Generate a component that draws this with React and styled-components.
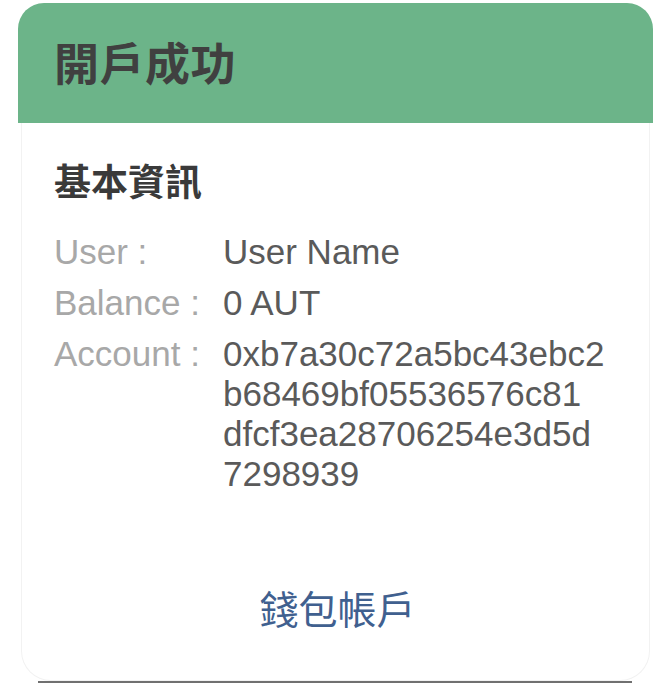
import React from "react";
import styled, { createGlobalStyle } from "styled-components";

const GlobalStyle = createGlobalStyle`
  body {
    margin: 0;
    background: #ffffff;
    font-family: "Liberation Sans", "Noto Sans CJK TC", sans-serif;
  }
`;

const Page = styled.div`
  padding: 3px 7px 0 18px;
  width: 635px;
`;

const Header = styled.div`
  height: 120px;
  display: flex;
  align-items: center;
  padding-left: 36px;
  background: #6cb489;
  border-radius: 26px 26px 0 0;
`;

const Title = styled.h1`
  margin: 0 0 4px;
  font-family: "Noto Sans CJK TC", sans-serif;
  font-size: 45px;
  font-weight: 700;
  color: #404040;
  letter-spacing: 0.5px;
`;

const Body = styled.div`
  margin: 0 3px;
  padding: 35px 20px 51px 32px;
  background: #ffffff;
  border: 1px solid #f2f2f2;
  border-top: none;
  border-radius: 0 0 30px 30px;
`;

const SectionTitle = styled.h2`
  margin: 0 0 30px;
  height: 44px;
  line-height: 44px;
  font-family: "Noto Sans CJK TC", sans-serif;
  font-size: 37px;
  font-weight: 700;
  color: #3a3a3a;
`;

const InfoList = styled.div`
  display: flex;
  flex-direction: column;
  gap: 11px;
`;

const Row = styled.div`
  display: flex;
  font-size: 35px;
  line-height: 40px;
`;

const Label = styled.span`
  flex: 0 0 169px;
  color: #a8a8a8;
`;

const Value = styled.span`
  display: flex;
  flex-direction: column;
  color: #5a5a5a;
`;

const WalletButton = styled.button`
  display: block;
  margin: 85px auto 0;
  padding: 0 8px 0 0;
  height: 50px;
  border: none;
  background: none;
  font-family: "Noto Sans CJK TC", sans-serif;
  font-size: 39px;
  font-weight: 400;
  color: #40608f;
  cursor: pointer;
`;

const BottomLine = styled.div`
  height: 2px;
  margin: 0 21px 0 20px;
  background: #707070;
`;

const info = [
  { label: "User :", lines: ["User Name"] },
  { label: "Balance :", lines: ["0 AUT"] },
  {
    label: "Account :",
    lines: [
      "0xb7a30c72a5bc43ebc2",
      "b68469bf05536576c81",
      "dfcf3ea28706254e3d5d",
      "7298939",
    ],
  },
];

export default function App() {
  return (
    <>
      <GlobalStyle />
      <Page>
        <Header>
          <Title>開戶成功</Title>
        </Header>
        <Body>
          <SectionTitle>基本資訊</SectionTitle>
          <InfoList>
            {info.map((item) => (
              <Row key={item.label}>
                <Label>{item.label}</Label>
                <Value>
                  {item.lines.map((line) => (
                    <span key={line}>{line}</span>
                  ))}
                </Value>
              </Row>
            ))}
          </InfoList>
          <WalletButton>錢包帳戶</WalletButton>
        </Body>
        <BottomLine />
      </Page>
    </>
  );
}
